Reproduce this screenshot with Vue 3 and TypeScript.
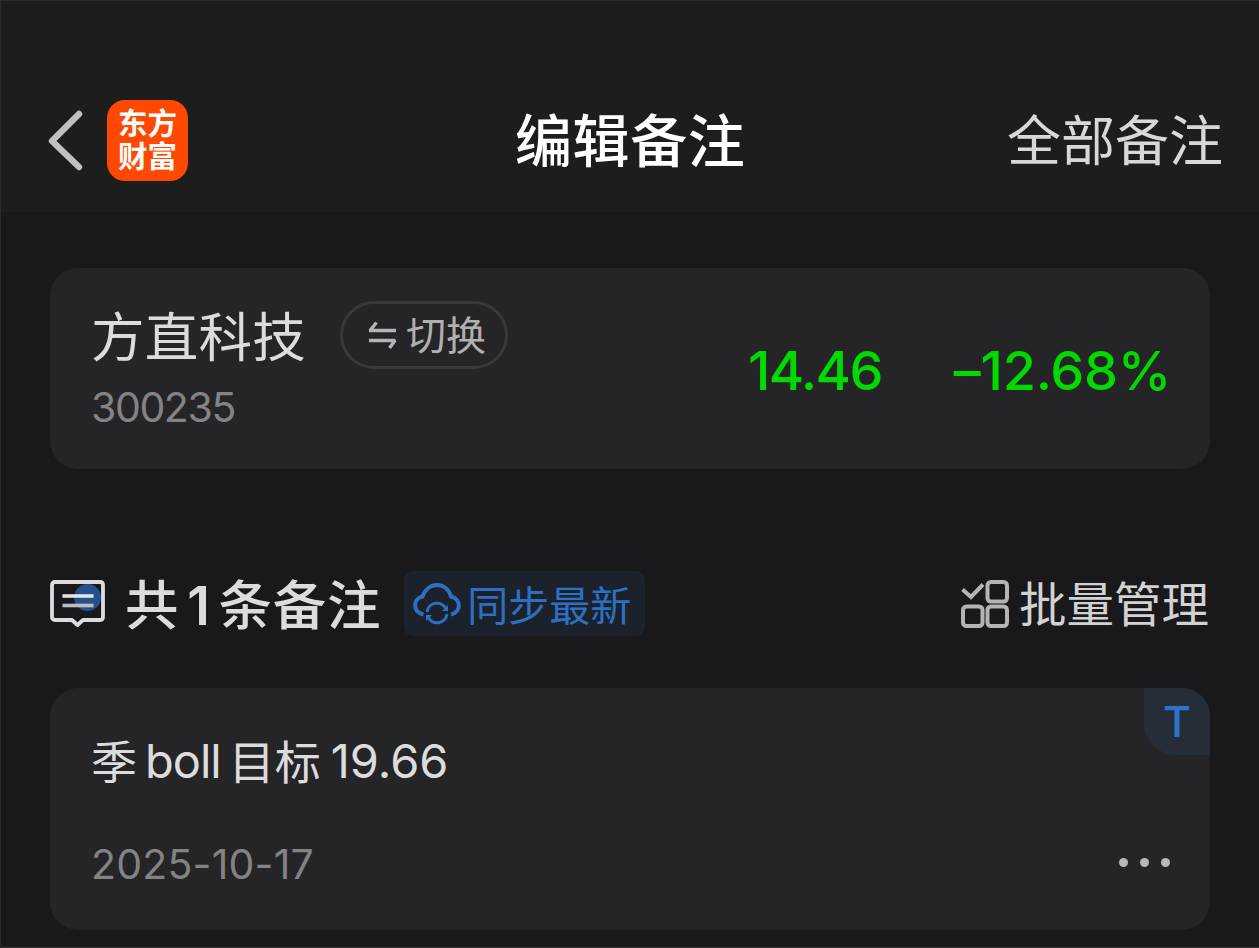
<script setup lang="ts">
interface Stock {
  name: string
  code: string
  price: string
  change: string
}

const stock: Stock = { name: '方直科技', code: '300235', price: '14.46', change: '–12.68%' }
const noteDate = '2025-10-17'
</script>

<template>
  <div class="page">
    <header class="header">
      <div class="left">
        <svg class="back" width="36" height="62" viewBox="0 0 36 62">
          <path d="M31 5 L4 32 L31 58" fill="none" stroke="#c0c0c0" stroke-width="6.4" stroke-linecap="round" stroke-linejoin="round" />
        </svg>
        <div class="logo"><span>东方</span><span>财富</span></div>
      </div>
      <h1 class="title">编辑备注</h1>
      <span class="all">全部备注</span>
    </header>

    <main class="main">
      <section class="card stock">
        <div class="ident">
          <div class="name-row">
            <span class="name">{{ stock.name }}</span>
            <button class="switch">
              <svg width="30" height="30" viewBox="0 0 30 30">
                <path d="M1 10.500 H28 M2 10.500 L8.500 2.500 M1 20.500 H27 L21.500 28" fill="none" stroke="#b4b4b5" stroke-width="3.4" stroke-linejoin="bevel" />
              </svg>
              <span>切换</span>
            </button>
          </div>
          <div class="code">{{ stock.code }}</div>
        </div>
        <span class="price">{{ stock.price }}</span>
        <span class="change">{{ stock.change }}</span>
      </section>

      <section class="bar">
        <svg class="note-icon" width="56" height="50" viewBox="0 0 56 50">
          <circle cx="37.500" cy="18.500" r="13.500" fill="#25508a" />
          <path d="M5 3 H50 Q53 3 53 6 V38 Q53 41 50 41 H33 L27.500 46 L22 41 H5 Q2 41 2 38 V6 Q2 3 5 3 Z" fill="none" stroke="#dcdcdd" stroke-width="3.800" stroke-linejoin="round" />
          <path d="M12.500 17 H43.500" stroke="#e1e4e8" stroke-width="3.600" />
          <path d="M12.500 26.500 H43.500" stroke="#b7bdc7" stroke-width="3.600" />
        </svg>
        <h2 class="count"><span>共</span><span class="num">1</span><span>条备注</span></h2>
        <button class="sync">
          <svg width="48" height="44" viewBox="0 0 48 44" fill="none" stroke="#2d70c2" stroke-width="4">
            <path d="M10.500 32.500 C-1 29.500 0 16.500 9.500 14.500 C15 -1 33.500 -1 38 14.500 C48.500 17 48.500 30 38 32.500" />
            <path d="M14 30 A10 10 0 0 1 33 27 M34 32 A10 10 0 0 1 15 35" stroke-width="3" />
            <path d="M35 23 V29 H29 Z M13 39 V33 H19 Z" fill="#2d70c2" stroke="none" />
          </svg>
          <span>同步最新</span>
        </button>
        <div class="manage">
          <svg width="48" height="48" viewBox="0 0 48 48" fill="none" stroke="#b4b4b5" stroke-width="4">
            <path d="M1.500 9.500 L10 17 L22 4.500" />
            <rect x="26.500" y="2" width="19.500" height="19.500" rx="3.500" />
            <rect x="2" y="26.500" width="19.500" height="19.500" rx="3.500" />
            <rect x="26.500" y="26.500" width="19.500" height="19.500" rx="3.500" />
          </svg>
          <span>批量管理</span>
        </div>
      </section>

      <section class="card note">
        <div class="tag">T</div>
        <div class="note-text">
          <span>季</span><span class="latin word">boll</span><span>目标</span><span class="latin value">19.66</span>
        </div>
        <div class="foot">
          <span class="date">{{ noteDate }}</span>
          <span class="more"><i></i><i></i><i></i></span>
        </div>
      </section>
    </main>
  </div>
</template>

<style>
body {
  margin: 0;
  background: #19191b;
}
</style>

<style scoped>
.page {
  box-sizing: border-box;
  width: 1259px;
  height: 948px;
  overflow: hidden;
  background: #19191b;
  color: #dcdcdd;
  font-family: Inter, 'Noto Sans CJK SC', sans-serif;
  box-shadow: inset 1px 1px 0 #2a2a2b, inset 0 -1px 0 #343234;
  white-space: nowrap;
}
.header {
  box-sizing: border-box;
  height: 212px;
  padding: 68px 36px 0 48px;
  display: grid;
  grid-template-columns: 467px auto 1fr;
  align-items: center;
  background: #1d1d1d;
  box-shadow: inset 1px 1px 0 #2c2c2d;
}
.left {
  display: flex;
  align-items: center;
  gap: 23px;
}
.back {
  display: block;
}
.logo {
  box-sizing: border-box;
  width: 81px;
  height: 81px;
  border-radius: 18px;
  background: #ff4800;
  color: #fff;
  display: flex;
  flex-direction: column;
  align-items: center;
  padding-top: 7px;
  font-family: 'Liberation Sans', 'Noto Sans CJK SC', sans-serif;
  font-size: 29.5px;
  font-weight: 700;
  line-height: 33px;
}
.title,
.all {
  margin: 0;
  padding-top: 4px;
  line-height: 72px;
}
.title {
  color: #fff;
  font-size: 57px;
  font-weight: 500;
  letter-spacing: 0.6px;
}
.all {
  justify-self: end;
  font-size: 54px;
  font-weight: 400;
  color: #d8d8d8;
}
.main {
  padding: 56px 49px 0 50px;
}
.card {
  box-sizing: border-box;
  border-radius: 28px;
  background: #252527;
}
.stock {
  height: 201px;
  padding: 33px 39px 0 41px;
  display: flex;
  align-items: flex-start;
}
.ident {
  flex: 1;
}
.name-row {
  display: flex;
  align-items: center;
  height: 68px;
}
.name {
  padding-top: 5px;
  font-size: 53.5px;
  font-weight: 400;
  line-height: 68px;
  letter-spacing: 0.25px;
}
.switch {
  box-sizing: border-box;
  width: 168px;
  height: 68px;
  margin-left: 34px;
  padding: 0 0 0 25px;
  display: flex;
  align-items: center;
  gap: 8px;
  border: 3px solid #39393b;
  border-radius: 34px;
  background: transparent;
  color: #b0b0b1;
  font: 400 40px/60px 'Noto Sans CJK SC', sans-serif;
}
.switch span {
  padding-bottom: 4px;
}
.code {
  margin-top: 14px;
  font-size: 41px;
  line-height: 48px;
  letter-spacing: -1.4px;
  color: #838384;
}
.price,
.change {
  margin-top: 37px;
  color: #00da00;
  font-size: 54px;
  font-weight: 500;
  line-height: 66px;
}
.price {
  letter-spacing: -1.6px;
}
.change {
  margin-left: 72px;
  letter-spacing: -0.3px;
}
.bar {
  display: flex;
  align-items: center;
  height: 65px;
  margin-top: 102px;
}
.note-icon {
  display: block;
}
.count {
  display: flex;
  align-items: center;
  margin: 0 0 0 19px;
  padding-top: 4px;
  font-size: 53.5px;
  font-weight: 500;
  line-height: 65px;
  letter-spacing: 0.7px;
}
.num {
  font-weight: 600;
  margin: 0 8px 0 8px;
}
.sync {
  box-sizing: border-box;
  width: 241px;
  height: 65px;
  margin: 0 0 0 23px;
  padding: 0 0 0 9px;
  display: flex;
  align-items: center;
  gap: 6px;
  border: 0;
  border-radius: 9px;
  background: #1b222c;
  color: #2d70c2;
  font: 400 41px/60px 'Noto Sans CJK SC', sans-serif;
}
.sync span {
  padding-bottom: 2px;
}
.manage {
  margin-left: auto;
  margin-right: 1px;
  display: flex;
  align-items: center;
  gap: 10px;
  font-size: 47.5px;
  font-weight: 400;
  line-height: 65px;
  color: #d2d2d3;
}
.manage span {
  padding-top: 2px;
}
.note {
  position: relative;
  height: 242px;
  margin-top: 52px;
  padding: 42px 40px 0 41px;
  overflow: hidden;
}
.tag {
  position: absolute;
  top: 0;
  right: 0;
  width: 66px;
  height: 67px;
  border-bottom-left-radius: 32px;
  background: #252d38;
  color: #2d73cb;
  font-size: 43px;
  font-weight: 550;
  line-height: 67px;
  text-align: center;
}
.note-text {
  display: flex;
  align-items: center;
  height: 64px;
  font-size: 46px;
  font-weight: 400;
  line-height: 64px;
}
.latin {
  font-size: 47px;
  font-weight: 400;
  padding-bottom: 2px;
}
.word {
  margin: 0 8px 0 8px;
  letter-spacing: -1px;
}
.value {
  margin-left: 10px;
}
.foot {
  display: flex;
  align-items: center;
  justify-content: space-between;
  margin-top: 44px;
  height: 48px;
}
.date {
  padding-top: 4px;
  font-size: 41px;
  letter-spacing: 0.2px;
  color: #838384;
}
.more {
  display: flex;
  gap: 12px;
}
.more i {
  width: 9px;
  height: 9px;
  border-radius: 50%;
  background: #b8b8b9;
}
</style>
